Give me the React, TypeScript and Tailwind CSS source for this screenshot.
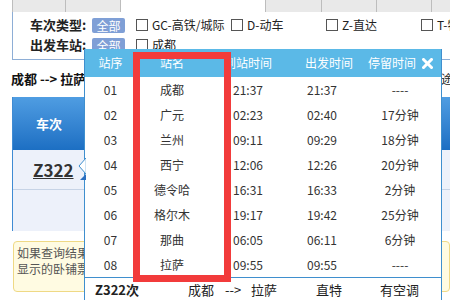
import React from "react";

const rows = [
  ["01", "成都", "21:37", "21:37", "----"],
  ["02", "广元", "02:23", "02:40", "17分钟"],
  ["03", "兰州", "09:11", "09:29", "18分钟"],
  ["04", "西宁", "12:06", "12:26", "20分钟"],
  ["05", "德令哈", "16:31", "16:33", "2分钟"],
  ["06", "格尔木", "19:17", "19:42", "25分钟"],
  ["07", "那曲", "06:05", "06:11", "6分钟"],
  ["08", "拉萨", "09:55", "09:55", "----"],
];

function Cell({ w, text }: { w: string; text?: string }) {
  return (
    <div className={`${w} h-[12px] overflow-hidden bg-[#e9e9e9] border-l border-[#bdbdbd] text-center shrink-0`}>
      {text && <div className="-mt-[13px] text-[12px] leading-[16px] text-[#444]">{text}</div>}
    </div>
  );
}

function Check({ label }: { label: string }) {
  return (
    <div className="w-[95px] flex items-center gap-[4px] shrink-0">
      <span className="w-[12px] h-[12px] border border-[#555] bg-white shrink-0" />
      <span className="text-[12px] leading-[20px] text-[#222] whitespace-nowrap">{label}</span>
    </div>
  );
}

export default function App() {
  return (
    <div className="relative w-[450px] h-[300px] overflow-hidden bg-white font-['Noto_Sans_CJK_SC',sans-serif] text-[#333]">
      {/* top tab strip */}
      <div className="flex h-[12px]">
        <div className="w-[12px] shrink-0" />
        <Cell w="w-[53px]" text="01-18" />
        <Cell w="w-[55px]" text="01-19" />
        <div className="w-[145px] shrink-0 border-l border-[#bdbdbd]" />
        <Cell w="w-[56px]" text="01-21" />
        <Cell w="w-[55px]" text="01-22" />
        <Cell w="w-[55px]" text="01-23" />
        <Cell w="w-[19px]" text="0" />
      </div>

      {/* filter box */}
      <div className="ml-[12px] h-[48px] border-l border-b border-[#8eaed6] pl-[17px] pt-[3px] overflow-hidden">
        <div className="flex items-center h-[20px]">
          <span className="w-[62px] shrink-0 whitespace-nowrap text-[13px] font-bold text-[#222] leading-[20px]">车次类型:</span>
          <span className="w-[33px] shrink-0 h-[15px] rounded-[2px] bg-[#7f9fd6] text-white text-[12px] leading-[15px] text-center">全部</span>
          <div className="w-[11px] shrink-0" />
          <Check label="GC-高铁/城际" />
          <Check label="D-动车" />
          <Check label="Z-直达" />
          <Check label="T-特快" />
        </div>
        <div className="flex items-center h-[20px]">
          <span className="w-[62px] shrink-0 whitespace-nowrap text-[13px] font-bold text-[#222] leading-[20px]">出发车站:</span>
          <span className="w-[33px] shrink-0 h-[15px] rounded-[2px] bg-[#7f9fd6] text-white text-[12px] leading-[15px] text-center">全部</span>
          <div className="w-[11px] shrink-0" />
          <Check label="成都" />
        </div>
      </div>

      {/* route line */}
      <div className="flex h-[37px] items-center pl-[11px]">
        <span className="text-[13px] font-bold text-[#111] leading-[37px]">成都 --&gt; 拉萨</span>
        <span className="ml-auto w-[9px] overflow-hidden whitespace-nowrap text-[12px] text-[#222]">途经</span>
      </div>

      {/* background table */}
      <div className="ml-[12px] border-l border-[#3f8bd3]">
        <div className="h-[53px] bg-gradient-to-b from-[#4f9de2] to-[#1c6fc3] flex items-center">
          <span className="w-[72px] text-center text-white font-bold text-[13px]">车次</span>
        </div>
        <div className="h-[40px] bg-[#edf1fa] border-b border-[#c6d3e6] flex items-center pl-[20px]">
          <span className="text-[17px] font-bold underline text-[#333] leading-[20px]">Z322</span>
        </div>
        <div className="h-[41px] bg-[#edf1fa]" />
      </div>
      <div className="h-[10px]" />
      <div className="ml-[13px] h-[51px] rounded-[4px] border border-[#efd985] bg-[#fffbe2] pl-[3px] pt-[3px] text-[12px] leading-[16px] text-[#555] whitespace-nowrap">
        <div>如果查询结果中没有满足条件的车次，请尝试</div>
        <div>显示的卧铺票价均为上铺票价，供您参考</div>
      </div>

      {/* popup */}
      <div className="absolute left-[84px] top-[49px] w-[358px] h-[260px] bg-white border-x border-[#3f8fce]">
        <div className="grid grid-cols-[51px_72px_80px_80px_73px] h-[28px] bg-[#5bb9e7] text-white text-[12px] leading-[28px]">
          <span className="text-center">站序</span>
          <span className="text-center">站名</span>
          <span className="text-center">到站时间</span>
          <span className="pl-[17px]">出发时间</span>
          <span className="flex items-center">
            停留时间
            <svg className="ml-[6px]" width="11" height="11" viewBox="0 0 11 11">
              <path d="M1.5 1.5 L9.5 9.5 M9.5 1.5 L1.5 9.5" stroke="white" strokeWidth="3" strokeLinecap="square" />
            </svg>
          </span>
        </div>
        {rows.map((r) => (
          <div key={r[0]} className="grid grid-cols-[51px_72px_80px_80px_73px] h-[25px] text-[12px] leading-[25px] text-[#333]">
            <span className="text-center">{r[0]}</span>
            <span className="text-center">{r[1]}</span>
            <span className="text-center">{r[2]}</span>
            <span className="pl-[19px]">{r[3]}</span>
            <span className="text-center pr-[9px]">{r[4]}</span>
          </div>
        ))}
        <div className="border-t border-[#3f8fce] flex items-center h-[24px] pl-[10px] text-[13px] leading-[22px] text-[#222]">
          <span className="w-[93px] font-bold">Z322次</span>
          <span className="w-[37px]">成都</span>
          <span className="w-[26px]">--&gt;</span>
          <span className="w-[65px]">拉萨</span>
          <span className="w-[64px]">直特</span>
          <span>有空调</span>
        </div>

        {/* callout arrow */}
        <svg className="absolute left-[-7px] top-[109px]" width="8" height="16" viewBox="0 0 8 16">
          <path d="M8 0 L1 8 L8 16 Z" fill="white" stroke="#3f8fce" strokeWidth="1" />
          <rect x="7.5" y="1" width="1" height="14" fill="white" />
        </svg>
        <svg className="absolute left-[-5px] top-[125px]" width="6" height="6" viewBox="0 0 6 6">
          <path d="M6 0 L6 6 L0 6 Z" fill="#2a6fc0" />
        </svg>
      </div>

      {/* red annotation rectangle */}
      <div className="absolute left-[133px] top-[52px] w-[98px] h-[230px] border-[7px] border-[#f23b3b]" />
    </div>
  );
}
